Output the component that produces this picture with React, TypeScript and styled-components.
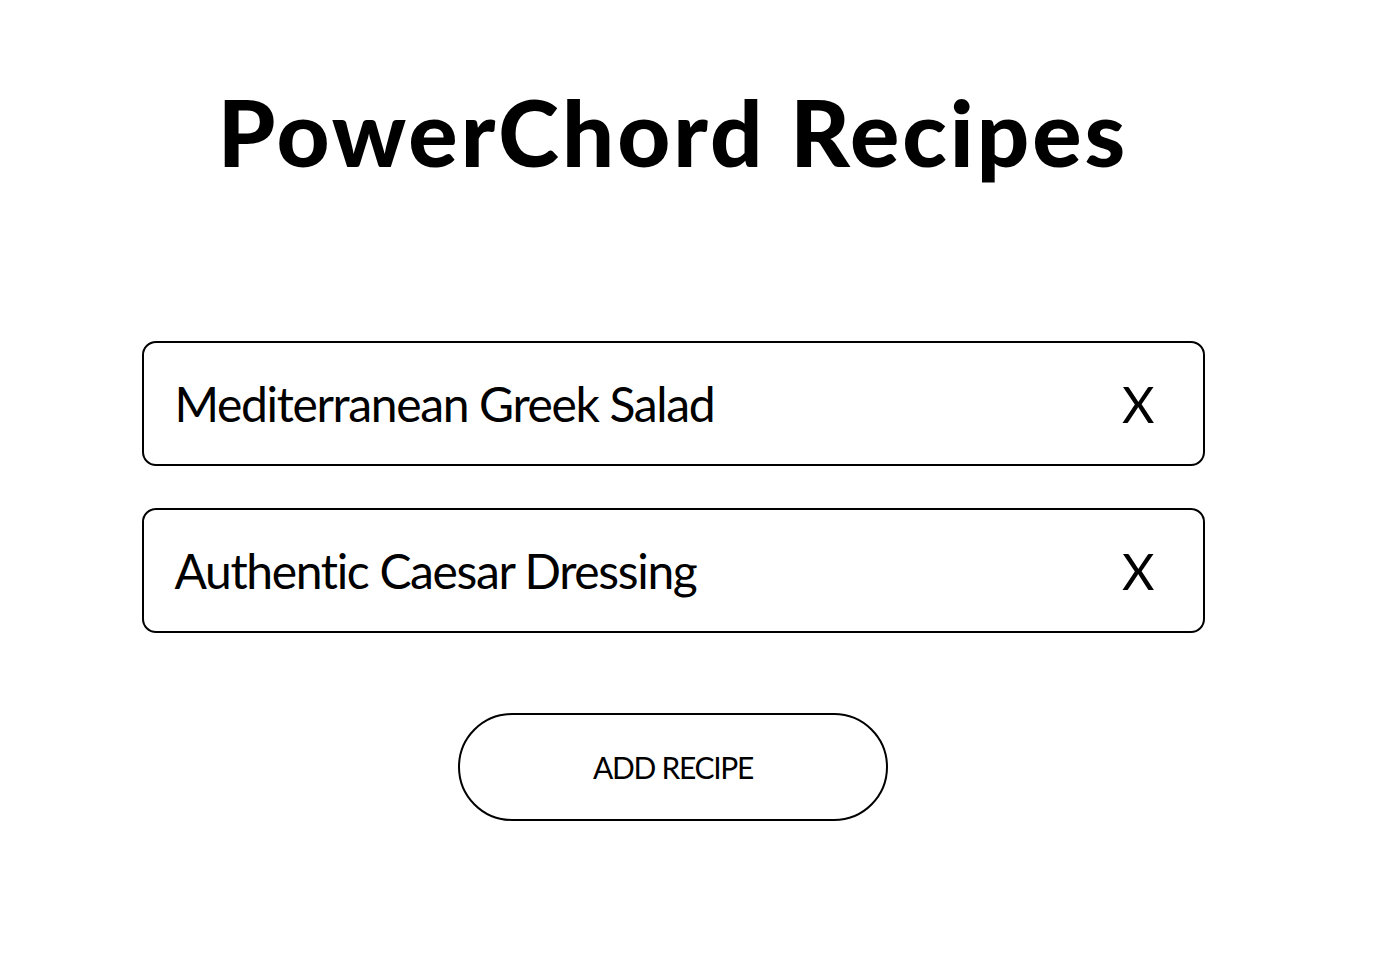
import React from "react";
import styled, { createGlobalStyle } from "styled-components";

const Global = createGlobalStyle`
  html, body { margin: 0; padding: 0; background: #fff; }
  body { font-family: "Lato", "Open Sans", sans-serif; color: #000; }
`;

const Page = styled.main`
  width: 1330px;
  margin-left: 8px;
  display: flex;
  flex-direction: column;
  align-items: center;
`;

const Title = styled.h1`
  margin: 82px 0 0;
  font-size: 92px;
  font-weight: 900;
  line-height: 100px;
  letter-spacing: 3px;
`;

const List = styled.ul`
  list-style: none;
  margin: 159px 0 0;
  padding: 0;
  width: 1063px;
  display: flex;
  flex-direction: column;
  gap: 42px;
`;

const Card = styled.li`
  box-sizing: border-box;
  height: 125px;
  border: 2px solid #000;
  border-radius: 14px;
  display: flex;
  align-items: center;
  justify-content: space-between;
  padding: 0 48px 0 31px;
`;

const Name = styled.span`
  font-size: 48px;
  font-weight: 400;
  letter-spacing: -1.35px;
`;

const Remove = styled.button`
  border: none;
  background: none;
  padding: 0;
  font-family: inherit;
  font-size: 50px;
  color: #000;
  cursor: pointer;
`;

const AddButton = styled.button`
  margin-top: 80px;
  width: 430px;
  height: 108px;
  box-sizing: border-box;
  border: 2px solid #000;
  border-radius: 54px;
  background: #fff;
  font-family: inherit;
  font-size: 30px;
  letter-spacing: -1.3px;
  color: #000;
  cursor: pointer;
`;

const recipes = ["Mediterranean Greek Salad", "Authentic Caesar Dressing"];

export default function App() {
  return (
    <>
      <Global />
      <Page>
        <Title>PowerChord Recipes</Title>
        <List>
          {recipes.map((r) => (
            <Card key={r}>
              <Name>{r}</Name>
              <Remove>X</Remove>
            </Card>
          ))}
        </List>
        <AddButton>ADD RECIPE</AddButton>
      </Page>
    </>
  );
}
